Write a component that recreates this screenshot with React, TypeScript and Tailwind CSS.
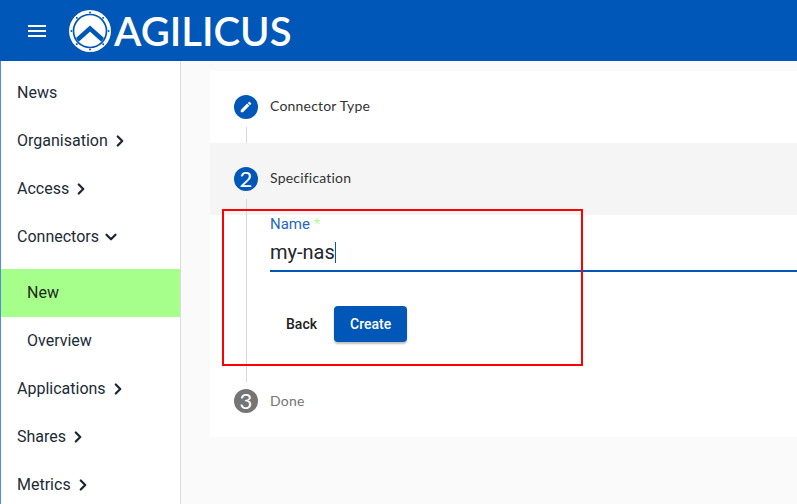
import { ChevronDown, ChevronRight } from 'lucide-react';

const navTop = [
  { label: 'News' },
  { label: 'Organisation', arrow: true },
  { label: 'Access', arrow: true },
];
const navBottom = [
  { label: 'Applications', arrow: true },
  { label: 'Shares', arrow: true },
  { label: 'Metrics', arrow: true },
];

function NavRow({ label, arrow }: { label: string; arrow?: boolean }) {
  return (
    <div className="h-12 flex items-center pl-4 text-[16px] text-[#212b36]">
      <span>{label}</span>
      {arrow && <ChevronRight size={18} strokeWidth={3} className="ml-[3px] text-[#1c2733]" />}
    </div>
  );
}

function Logo() {
  const dots = [0, 45, 90, 135, 180, 225, 270, 315];
  return (
    <svg width="42" height="42" viewBox="0 0 42 42" className="shrink-0">
      <defs>
        <clipPath id="logo-inner">
          <circle cx="21" cy="21" r="15.500" />
        </clipPath>
      </defs>
      <circle cx="21" cy="21" r="21" fill="#fff" />
      {dots.map((a) => (
        <circle key={a} cx="21" cy="2.400" r="1" fill="#0057b8" transform={`rotate(${a} 21 21)`} />
      ))}
      <circle cx="21" cy="21" r="16.500" fill="none" stroke="#0057b8" strokeWidth="1.700" />
      <path
        d="M6 32 L21 18.500 L36 32"
        fill="none"
        stroke="#0057b8"
        strokeWidth="4.500"
        clipPath="url(#logo-inner)"
      />
    </svg>
  );
}

function StepCircle({ children, muted }: { children: React.ReactNode; muted?: boolean }) {
  return (
    <div
      className={`w-6 h-6 rounded-full flex items-center justify-center text-white text-[22px] leading-none font-normal font-['Lato',sans-serif] ${
        muted ? 'bg-[#757575]' : 'bg-[#0057b8]'
      }`}
    >
      {children}
    </div>
  );
}

export default function App() {
  return (
    <div className="w-[797px] h-[504px] overflow-hidden flex flex-col font-['Roboto',sans-serif] bg-white">
      <header className="h-[61px] shrink-0 bg-[#0057b8] flex items-center pl-[25px]">
        <svg width="24" height="24" viewBox="0 0 24 24" fill="#fff" className="shrink-0">
          <path d="M3 18h18v-2H3v2zm0-5h18v-2H3v2zm0-7v2h18V6H3z" />
        </svg>
        <div className="ml-5 flex items-center">
          <Logo />
          <span className="ml-[3px] text-white font-['Lato',sans-serif] font-semibold text-[40px] leading-none">
            AGILICUS
          </span>
        </div>
      </header>

      <div className="flex flex-1 min-h-0">
        <nav className="w-[181px] shrink-0 border-l border-l-[#4a90e2] border-r border-r-[#dcdcdc] pt-2">
          {navTop.map((n) => (
            <NavRow key={n.label} {...n} />
          ))}
          <div className="h-12 flex items-center pl-4 text-[16px] text-[#212b36]">
            <span>Connectors</span>
            <ChevronDown size={18} strokeWidth={3} className="ml-[3px] text-[#1c2733]" />
          </div>
          <div className="mt-2 h-12 flex items-center pl-[26px] text-[16px] text-[#1d2a1d] bg-[#a6ff8a]">New</div>
          <div className="h-12 flex items-center pl-[26px] text-[16px] text-[#212b36]">Overview</div>
          {navBottom.map((n) => (
            <NavRow key={n.label} {...n} />
          ))}
        </nav>

        <main className="flex-1 bg-[#fafafa] pt-[10px] pl-[29px] relative">
          <div className="bg-white font-['Lato',sans-serif] text-[14px] tracking-[0.2px]">
            <div className="relative h-[72px] flex items-center pl-6 gap-3 text-[#333333]">
              <StepCircle>
                <svg width="14" height="14" viewBox="0 0 24 24" fill="#fff">
                  <path d="M3 17.250V21h3.750L17.810 9.940l-3.750-3.750L3 17.250zM20.710 7.040a1 1 0 0 0 0-1.410l-2.340-2.340a1 1 0 0 0-1.410 0l-1.830 1.830 3.750 3.750 1.830-1.830z" />
                </svg>
              </StepCircle>
              <span className="pb-[3px]">Connector Type</span>
              <div className="absolute left-[36px] top-[56px] h-[32px] border-l border-[#d9d9d9]" />
            </div>

            <div className="relative h-[72px] flex items-center pl-6 gap-3 bg-[#f5f5f5] text-[#333333]">
              <StepCircle>2</StepCircle>
              <span className="pb-[3px]">Specification</span>
              <div className="absolute left-[36px] top-[56px] h-[16px] border-l border-[#d9d9d9]" />
            </div>

            <div className="ml-9 h-[150px] border-l border-[#d9d9d9] pl-[23px] font-['Roboto',sans-serif] tracking-normal">
              <div className="pt-[1px] text-[15px] leading-[17px] h-[18px] text-[#2468be]">
                Name <span className="text-[#b0ff96]">*</span>
              </div>
              <div className="h-[39px] border-b-2 border-[#0057b8] flex items-center text-[20px] text-[#26262b] pt-[1px]">
                my-nas
                <span className="w-px h-[21px] bg-[#0057b8]" />
              </div>
              <div className="mt-[34px] flex items-center gap-px">
                <button className="h-9 px-4 rounded text-[14px] font-medium text-[#212121]">Back</button>
                <button className="h-9 px-4 rounded text-[14px] font-medium text-white bg-[#0057b8] shadow-[0_2px_2px_rgba(0,0,0,0.25)]">
                  Create
                </button>
              </div>
            </div>

            <div className="relative h-[72px] flex items-center pl-6 gap-3 text-[#757575]">
              <StepCircle muted>3</StepCircle>
              <span className="pb-[1px]">Done</span>
              <div className="absolute left-[36px] top-0 h-[17px] border-l border-[#d9d9d9]" />
            </div>
          </div>

          <div className="absolute left-[41px] top-[148px] w-[361px] h-[157px] border-2 border-[#ff0000] pointer-events-none" />
        </main>
      </div>
    </div>
  );
}
